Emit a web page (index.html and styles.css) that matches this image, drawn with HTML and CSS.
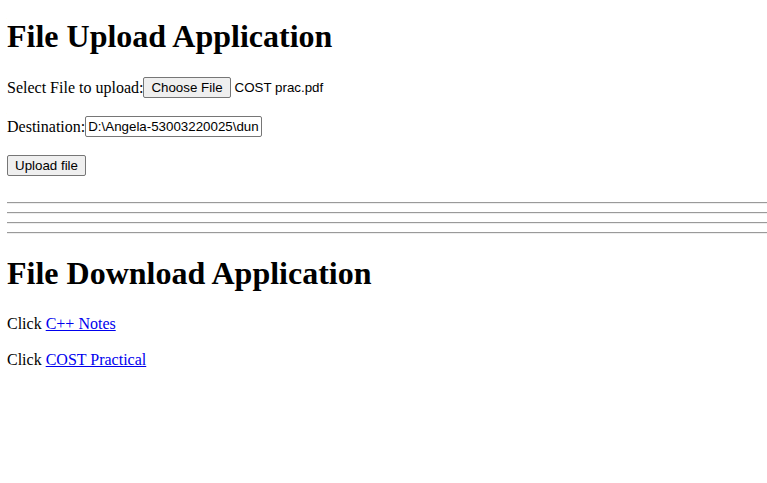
FILE: index.html
```html
<!DOCTYPE html>
<html>
<head>
<meta charset="utf-8">
<title>File Upload</title>
<link rel="stylesheet" href="styles.css">
</head>
<body class="page">
<h1 class="title title-first">File Upload Application</h1>
<form class="upload-form">
<p class="row form-row">Select File to upload:<span class="file-input"><button type="button" class="btn">Choose File</button><span class="file-name">COST prac.pdf</span></span></p>
<p class="row form-row">Destination:<input class="text-input" type="text" value="D:\Angela-53003220025\dun"></p>
<p class="row form-row"><button type="button" class="btn">Upload file</button></p>
</form>
<hr class="rule">
<hr class="rule">
<hr class="rule">
<hr class="rule">
<h1 class="title title-second">File Download Application</h1>
<p class="row link-row">Click <a class="link" href="#">C++ Notes</a></p>
<p class="row link-row">Click <a class="link" href="#">COST Practical</a></p>
</body>
</html>
```
FILE: styles.css
```css
.page {
  margin: 8px 0 8px 7px;
  font-family: "Liberation Serif", "Times New Roman", serif;
  font-size: 16px;
  color: #000;
  background: #fff;
}
.title {
  font-size: 32px;
  font-weight: bold;
  line-height: 37px;
  margin: 21px 0;
}
.title-first {
  margin-top: 10px;
}
.title-second {
  margin-bottom: 22px;
}
.upload-form {
  margin: 0;
  padding-bottom: 1px;
}
.row {
  margin: 16px 0;
}
.form-row {
  line-height: 23px;
  height: 23px;
  display: flex;
  align-items: center;
}
.link-row {
  line-height: 20px;
}
.file-input {
  display: inline-flex;
  align-items: center;
}
.btn {
  font-family: "Liberation Sans", Arial, sans-serif;
  font-size: 13.33px;
  line-height: 15px;
  color: #000;
  background: #efefef;
  border: 1px solid #767676;
  border-radius: 2px;
  padding: 1px 7px;
  height: 21px;
  margin: 0;
}
.file-name {
  font-family: "Liberation Sans", Arial, sans-serif;
  font-size: 13.33px;
  margin-left: 4px;
}
.text-input {
  font-family: "Liberation Sans", Arial, sans-serif;
  font-size: 13.33px;
  color: #000;
  width: 177px;
  height: 21px;
  box-sizing: border-box;
  border: 1px solid #767676;
  border-radius: 2px;
  padding: 1px 2px;
  margin: 0;
}
.rule {
  margin: 8px 0;
  border: none;
  border-top: 1px solid #9a9a9a;
  border-bottom: 1px solid #eeeeee;
  height: 0;
}
.link {
  color: #0000ee;
  text-decoration: underline;
}
```
